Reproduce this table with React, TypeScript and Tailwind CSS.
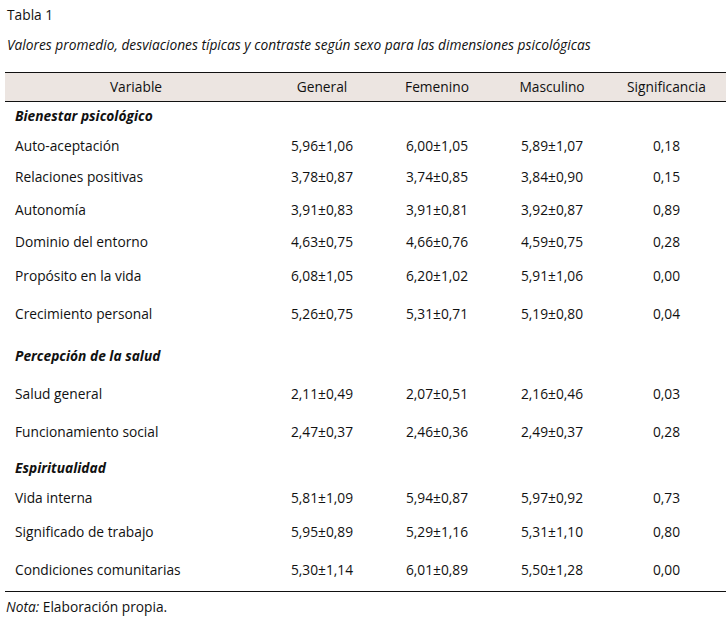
const font = { fontFamily: '"Open Sans", "Noto Sans", Arial, sans-serif' };

type Row =
  | { kind: "section"; label: string; h: string }
  | { kind: "data"; label: string; g: string; f: string; m: string; s: string; h: string };

const rows: Row[] = [
  { kind: "section", label: "Bienestar psicológico", h: "h-[30px]" },
  { kind: "data", label: "Auto-aceptación", g: "5,96±1,06", f: "6,00±1,05", m: "5,89±1,07", s: "0,18", h: "h-[30px]" },
  { kind: "data", label: "Relaciones positivas", g: "3,78±0,87", f: "3,74±0,85", m: "3,84±0,90", s: "0,15", h: "h-[32px]" },
  { kind: "data", label: "Autonomía", g: "3,91±0,83", f: "3,91±0,81", m: "3,92±0,87", s: "0,89", h: "h-[34px]" },
  { kind: "data", label: "Dominio del entorno", g: "4,63±0,75", f: "4,66±0,76", m: "4,59±0,75", s: "0,28", h: "h-[30px]" },
  { kind: "data", label: "Propósito en la vida", g: "6,08±1,05", f: "6,20±1,02", m: "5,91±1,06", s: "0,00", h: "h-[38px]" },
  { kind: "data", label: "Crecimiento personal", g: "5,26±0,75", f: "5,31±0,71", m: "5,19±0,80", s: "0,04", h: "h-[38px]" },
  { kind: "section", label: "Percepción de la salud", h: "h-[46px]" },
  { kind: "data", label: "Salud general", g: "2,11±0,49", f: "2,07±0,51", m: "2,16±0,46", s: "0,03", h: "h-[30px]" },
  { kind: "data", label: "Funcionamiento social", g: "2,47±0,37", f: "2,46±0,36", m: "2,49±0,37", s: "0,28", h: "h-[46px]" },
  { kind: "section", label: "Espiritualidad", h: "h-[26px]" },
  { kind: "data", label: "Vida interna", g: "5,81±1,09", f: "5,94±0,87", m: "5,97±0,92", s: "0,73", h: "h-[34px]" },
  { kind: "data", label: "Significado de trabajo", g: "5,95±0,89", f: "5,29±1,16", m: "5,31±1,10", s: "0,80", h: "h-[34px]" },
  { kind: "data", label: "Condiciones comunitarias", g: "5,30±1,14", f: "6,01±0,89", m: "5,50±1,28", s: "0,00", h: "h-[42px]" },
];

export default function App() {
  return (
    <div className="w-[726px] h-[625px] bg-white text-[#111] text-[13.75px]" style={font}>
      <div className="pl-[7px] pt-[5px] leading-[20px]">Tabla 1</div>
      <div className="pl-[7px] mt-[10px] italic leading-[20px]">
        Valores promedio, desviaciones típicas y contraste según sexo para las dimensiones psicológicas
      </div>

      <table className="ml-[5px] mt-[17px] w-[721px] table-fixed border-collapse">
        <colgroup>
          <col className="w-[262px]" />
          <col className="w-[110px]" />
          <col className="w-[120px]" />
          <col className="w-[110px]" />
          <col className="w-[119px]" />
        </colgroup>
        <thead>
          <tr className="h-[29px] bg-[#ece5e1] border-y border-[#111]">
            <th className="font-normal text-center p-0">Variable</th>
            <th className="font-normal text-center p-0">General</th>
            <th className="font-normal text-center p-0">Femenino</th>
            <th className="font-normal text-center p-0">Masculino</th>
            <th className="font-normal text-center p-0">Significancia</th>
          </tr>
        </thead>
        <tbody className="border-b border-[#111]">
          {rows.map((r) =>
            r.kind === "section" ? (
              <tr key={r.label} className={r.h}>
                <td colSpan={5} className="pl-[10px] p-0 font-bold italic">
                  {r.label}
                </td>
              </tr>
            ) : (
              <tr key={r.label} className={r.h}>
                <td className="pl-[10px] p-0">{r.label}</td>
                <td className="text-center p-0">{r.g}</td>
                <td className="text-center p-0">{r.f}</td>
                <td className="text-center p-0">{r.m}</td>
                <td className="text-center p-0">{r.s}</td>
              </tr>
            )
          )}
        </tbody>
      </table>

      <div className="pl-[6px] mt-[5px] leading-[20px]">
        <span className="italic">Nota:</span> Elaboración propia.
      </div>
    </div>
  );
}
